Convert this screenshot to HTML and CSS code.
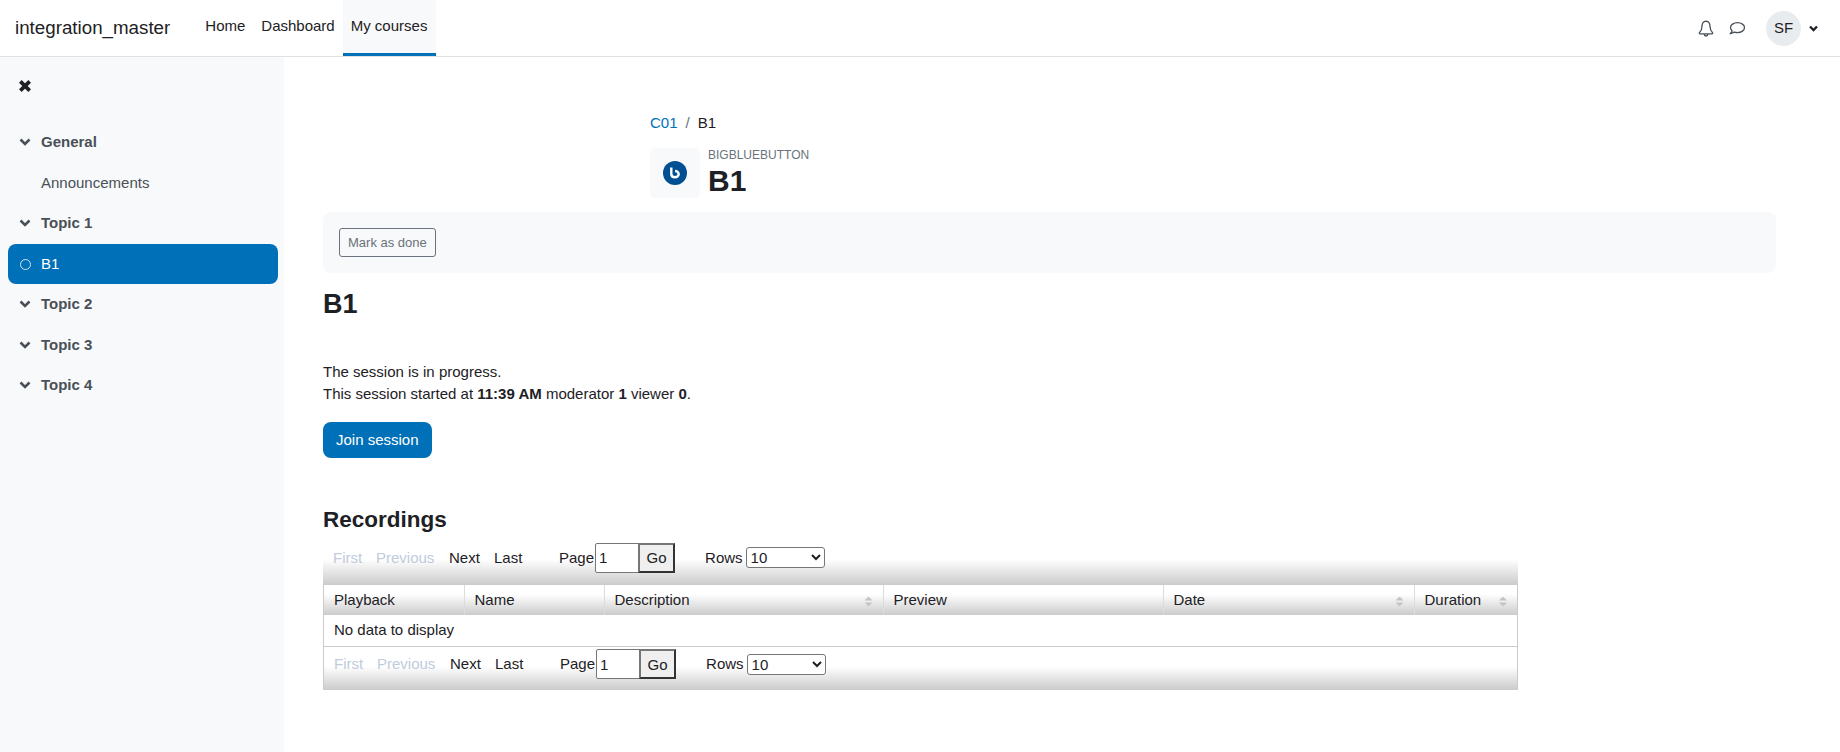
FILE: index.html
```html
<!doctype html>
<html>
    <head>
        <title>B1</title>
        <link rel="stylesheet" href="styles.css">
    </head>
    <body>

        <nav class="navbar">
            <a class="brand">integration_master</a>
            <ul class="primary">
                <li><a>Home</a></li>
                <li><a>Dashboard</a></li>
                <li class="active"><a>My courses</a></li>
            </ul>
            <div class="usermenu">
                <svg class="icon-bell" width="16" height="17" viewBox="0 0 16 17">
                    <path d="M8 1.2C5.3 1.6 4 3.6 4 6.2c0 3.6-1 5-2.6 6.6-.3.4 0 1 .5 1h12.2c.5 0 .8-.6.5-1C13 11.200 12 9.800 12 6.200c0-2.600-1.300-4.600-4-5zM6.200 14.200c0 1 .8 1.800 1.800 1.800s1.800-.8 1.800-1.800" fill="none" stroke="#495057" stroke-width="1.300"/>
                </svg>
                <svg class="icon-chat" width="17" height="15" viewBox="0 0 17 15">
                    <path d="M8.500 1.700c-3.900 0-7 2.100-7 4.900 0 1.200.6 2.300 1.600 3.200-.3.900-.9 1.800-1.600 2.700 1.500-.1 2.900-.6 3.900-1.400 1 .3 2 .5 3.100.5 3.900 0 7-2.200 7-5s-3.100-4.900-7-4.900z" fill="none" stroke="#495057" stroke-width="1.300"/>
                </svg>
                <span class="avatar">SF</span>
                <svg class="icon-caret" width="9" height="7" viewBox="0 0 9 7">
                    <path d="M1 1.500l3.500 3.500 3.500-3.500" fill="none" stroke="#1d2125" stroke-width="2.300"/>
                </svg>
            </div>
        </nav>

        <div class="app">
            <aside class="drawer">
                <svg class="icon-close" width="12" height="12" viewBox="0 0 12 12">
                    <path d="M2 2l8 8M10 2l-8 8" fill="none" stroke="#1d2125" stroke-width="3.200"/>
                </svg>
                <div class="index">
                    <a class="section"><svg class="chev" width="12" height="8" viewBox="0 0 12 8"><path d="M1.500 1.500l4.500 4.500 4.500-4.500" /></svg>General</a>
                    <a class="item">Announcements</a>
                    <a class="section"><svg class="chev" width="12" height="8" viewBox="0 0 12 8"><path d="M1.500 1.500l4.500 4.500 4.500-4.500" /></svg>Topic 1</a>
                    <a class="item current"><span class="dot"></span>B1</a>
                    <a class="section"><svg class="chev" width="12" height="8" viewBox="0 0 12 8"><path d="M1.500 1.500l4.500 4.500 4.500-4.500" /></svg>Topic 2</a>
                    <a class="section"><svg class="chev" width="12" height="8" viewBox="0 0 12 8"><path d="M1.500 1.500l4.500 4.500 4.500-4.500" /></svg>Topic 3</a>
                    <a class="section"><svg class="chev" width="12" height="8" viewBox="0 0 12 8"><path d="M1.500 1.500l4.500 4.500 4.500-4.500" /></svg>Topic 4</a>
                </div>
            </aside>

            <main class="content">
                <header class="pagehead">
                    <div class="crumbs"><a>C01</a><span class="sep">/</span><span>B1</span></div>
                    <div class="title">
                        <div class="iconbox">
                            <svg width="24" height="24" viewBox="0 0 24 24">
                                <circle cx="12" cy="12" r="12" fill="#004f93"/>
                                <path d="M8.300 6.500v6.500c0 2 1.600 3.300 3.700 3.300s3.700-1.400 3.700-3.200-1.600-3.100-3.600-3.100" fill="none" stroke="#fff" stroke-width="2.400"/>
                            </svg>
                        </div>
                        <div class="titletext">
                            <div class="modname">BIGBLUEBUTTON</div>
                            <h1>B1</h1>
                        </div>
                    </div>
                </header>

                <div class="activitybar">
                    <button class="markdone">Mark as done</button>
                </div>

                <h2>B1</h2>

                <p class="status">The session is in progress.<br>This session started at <b>11:39 AM</b> moderator <b>1</b> viewer <b>0</b>.</p>
                <button class="join">Join session</button>

                <h3>Recordings</h3>

                <div class="recordings">
                    <div class="pager">
                        <span class="off first">First</span>
                        <span class="off prev">Previous</span>
                        <a class="next">Next</a>
                        <a class="last">Last</a>
                        <label class="pg">Page<input type="text" value="1"></label>
                        <button class="go">Go</button>
                        <label class="rows">Rows <select><option>10</option><option>20</option><option>50</option></select></label>
                    </div>
                    <div class="framed">
                        <table>
                            <colgroup>
                                <col class="c1"><col class="c2"><col class="c3"><col class="c4"><col class="c5"><col class="c6">
                            </colgroup>
                            <thead>
                                <tr>
                                    <th>Playback</th>
                                    <th>Name</th>
                                    <th class="sort">Description</th>
                                    <th>Preview</th>
                                    <th class="sort">Date</th>
                                    <th class="sort">Duration</th>
                                </tr>
                            </thead>
                            <tbody>
                                <tr><td colspan="6">No data to display</td></tr>
                            </tbody>
                        </table>
                        <div class="pager bottom">
                            <span class="off first">First</span>
                            <span class="off prev">Previous</span>
                            <a class="next">Next</a>
                            <a class="last">Last</a>
                            <label class="pg">Page<input type="text" value="1"></label>
                            <button class="go">Go</button>
                            <label class="rows">Rows <select><option>10</option><option>20</option><option>50</option></select></label>
                        </div>
                    </div>
                </div>
            </main>
        </div>

    </body>
</html>
```

FILE: styles.css
```css
* {
    box-sizing:border-box;
}

body {
    margin:0;
    font-family:"Liberation Sans", Arial, sans-serif;
    font-size:15px;
    line-height:22.5px;
    color:#1d2125;
    background:#fff;
}

/* top bar */
.navbar {
    display:flex;
    align-items:stretch;
    height:57px;
    padding-left:15px;
    border-bottom:1px solid #dee2e6;
}

.brand {
    align-self:center;
    font-size:18.75px;
    margin-right:27px;
}

.primary {
    display:flex;
    list-style:none;
    margin:0;
    padding:0;
}

.primary li {
    display:flex;
    align-items:center;
    height:56px;
    padding:0 8px;
    border-bottom:3px solid transparent;
}

.primary .active {
    padding-right:9px;
    background:#f8f9fa;
    border-bottom-color:#0070b8;
}

.usermenu {
    display:flex;
    align-items:center;
    margin-left:auto;
    padding-right:22px;
}

.icon-bell { margin-right:15px; }
.icon-chat { margin-right:20px; }
.icon-caret { margin-left:8px; }

.avatar {
    display:flex;
    align-items:center;
    justify-content:center;
    width:35px;
    height:35px;
    border-radius:50%;
    background:#e9ecef;
}

/* layout */
.app {
    display:flex;
    min-height:695px;
}

.drawer {
    flex:0 0 284px;
    background:#f8f9fa;
    padding:22px 6px 0 8px;
}

.icon-close {
    display:block;
    margin-left:10px;
    width:14px;
    height:14px;
}

.index {
    margin-top:29px;
}

.section, .item {
    display:flex;
    align-items:center;
    color:#495057;
}

.section {
    height:38px;
    margin-bottom:3px;
    padding-top:2px;
    font-weight:bold;
}

.section:last-child {
    margin-top:-1px;
}

.item {
    height:40px;
    padding-left:33px;
}

.chev {
    width:12px;
    margin:0 10px 0 11px;
    fill:none;
    stroke:#495057;
    stroke-width:2.6;
}

.current {
    padding-left:12px;
    background:#0070b8;
    color:#fff;
    border-radius:8px;
}

.dot {
    width:11px;
    height:11px;
    margin-right:10px;
    border:1px solid #cfe6f5;
    border-radius:50%;
}

/* page body */
.content {
    flex:1;
    padding:55px 64px 0 39px;
}

.pagehead {
    padding-left:327px;
}

.crumbs a {
    color:#0070b8;
}

.sep {
    margin:0 8px;
    color:#6a737b;
}

.title {
    display:flex;
    gap:8px;
    margin-top:13px;
}

.iconbox {
    display:flex;
    align-items:center;
    justify-content:center;
    width:50px;
    height:50px;
    background:#f8f9fa;
    border-radius:5px;
}

.modname {
    font-size:12px;
    line-height:14px;
    color:#6a737b;
}

h1 {
    margin:0;
    font-size:30px;
    line-height:37px;
    font-weight:bold;
}

.activitybar {
    margin-top:13px;
    padding:16px;
    height:61px;
    background:#f8f9fa;
    border-radius:8px;
}

.markdone {
    display:block;
    height:29px;
    padding:0 8px;
    font:13px "Liberation Sans", Arial, sans-serif;
    color:#6a737b;
    background:transparent;
    border:1px solid #6a737b;
    border-radius:3px;
}

h2 {
    margin:16px 0 0;
    font-size:27px;
    line-height:31px;
}

.status {
    margin:41px 0 0;
}

.join {
    display:block;
    margin-top:16px;
    height:36px;
    padding:0 13px;
    font:15px "Liberation Sans", Arial, sans-serif;
    color:#fff;
    background:#0070b8;
    border:0;
    border-radius:8px;
}

h3 {
    margin:47px 0 0;
    font-size:22.5px;
    line-height:30px;
}

/* recordings table */
.recordings {
    width:1195px;
    margin-top:3px;
}

.pager {
    display:flex;
    align-items:flex-start;
    height:47px;
    padding:5px 0 0 10px;
    background:linear-gradient(#fff 45%, #cbcbcb);
    line-height:24px;
}

.pager > * {
    line-height:30px;
}

.pager.bottom {
    height:43px;
    padding-top:2px;
}

.off { color:#c0cbdc; }
.first { width:43px; }
.prev { width:73px; }
.next { width:45px; }
.last { width:65px; }

.pg {
    display:flex;
    margin-right:-1px;
}

.pg input {
    width:44px;
    height:30px;
    margin:0 0 0 1px;
    padding:0 3px;
    font:15px "Liberation Sans", Arial, sans-serif;
    color:#1d2125;
    border:1px solid #767676;
    border-radius:2px 0 0 2px;
}

.go {
    width:37px;
    height:30px;
    padding:0;
    font:15px "Liberation Sans", Arial, sans-serif;
    color:#1d2125;
    background:#efefef;
    border:2px solid;
    border-color:#767676 #333 #333 #767676;
}

.rows {
    display:flex;
    align-items:center;
    gap:3px;
    height:30px;
    margin-left:30px;
}

.rows select {
    width:79px;
    height:21px;
    font:15px "Liberation Sans", Arial, sans-serif;
    color:#1d2125;
    background:#fff;
    border:1px solid #767676;
    border-radius:3px;
}

.framed {
    border:1px solid #cbcbcb;
    border-width:0 1px;
}

table {
    width:100%;
    table-layout:fixed;
    border-collapse:collapse;
}

.c1 { width:140px; }
.c2 { width:140px; }
.c3 { width:279px; }
.c4 { width:280px; }
.c5 { width:251px; }
.c6 { width:103px; }

th {
    position:relative;
    height:30px;
    padding:2px 10px 0;
    text-align:left;
    font-weight:normal;
    background:linear-gradient(#fff 30%, #cbcbcb);
    border-right:1px solid #dcdcdc;
}

th:last-child {
    border-right:0;
}

/* sort arrows sit over the header cell */
.sort::after {
    content:"";
    position:absolute;
    right:10px;
    top:12px;
    width:8px;
    height:10px;
    background:#c4c4c4;
    clip-path:path("M4 0L8 4H0ZM0 6H8L4 10Z");
}

td {
    height:32px;
    padding:0 10px;
    border-bottom:1px solid #cbcbcb;
}
```
